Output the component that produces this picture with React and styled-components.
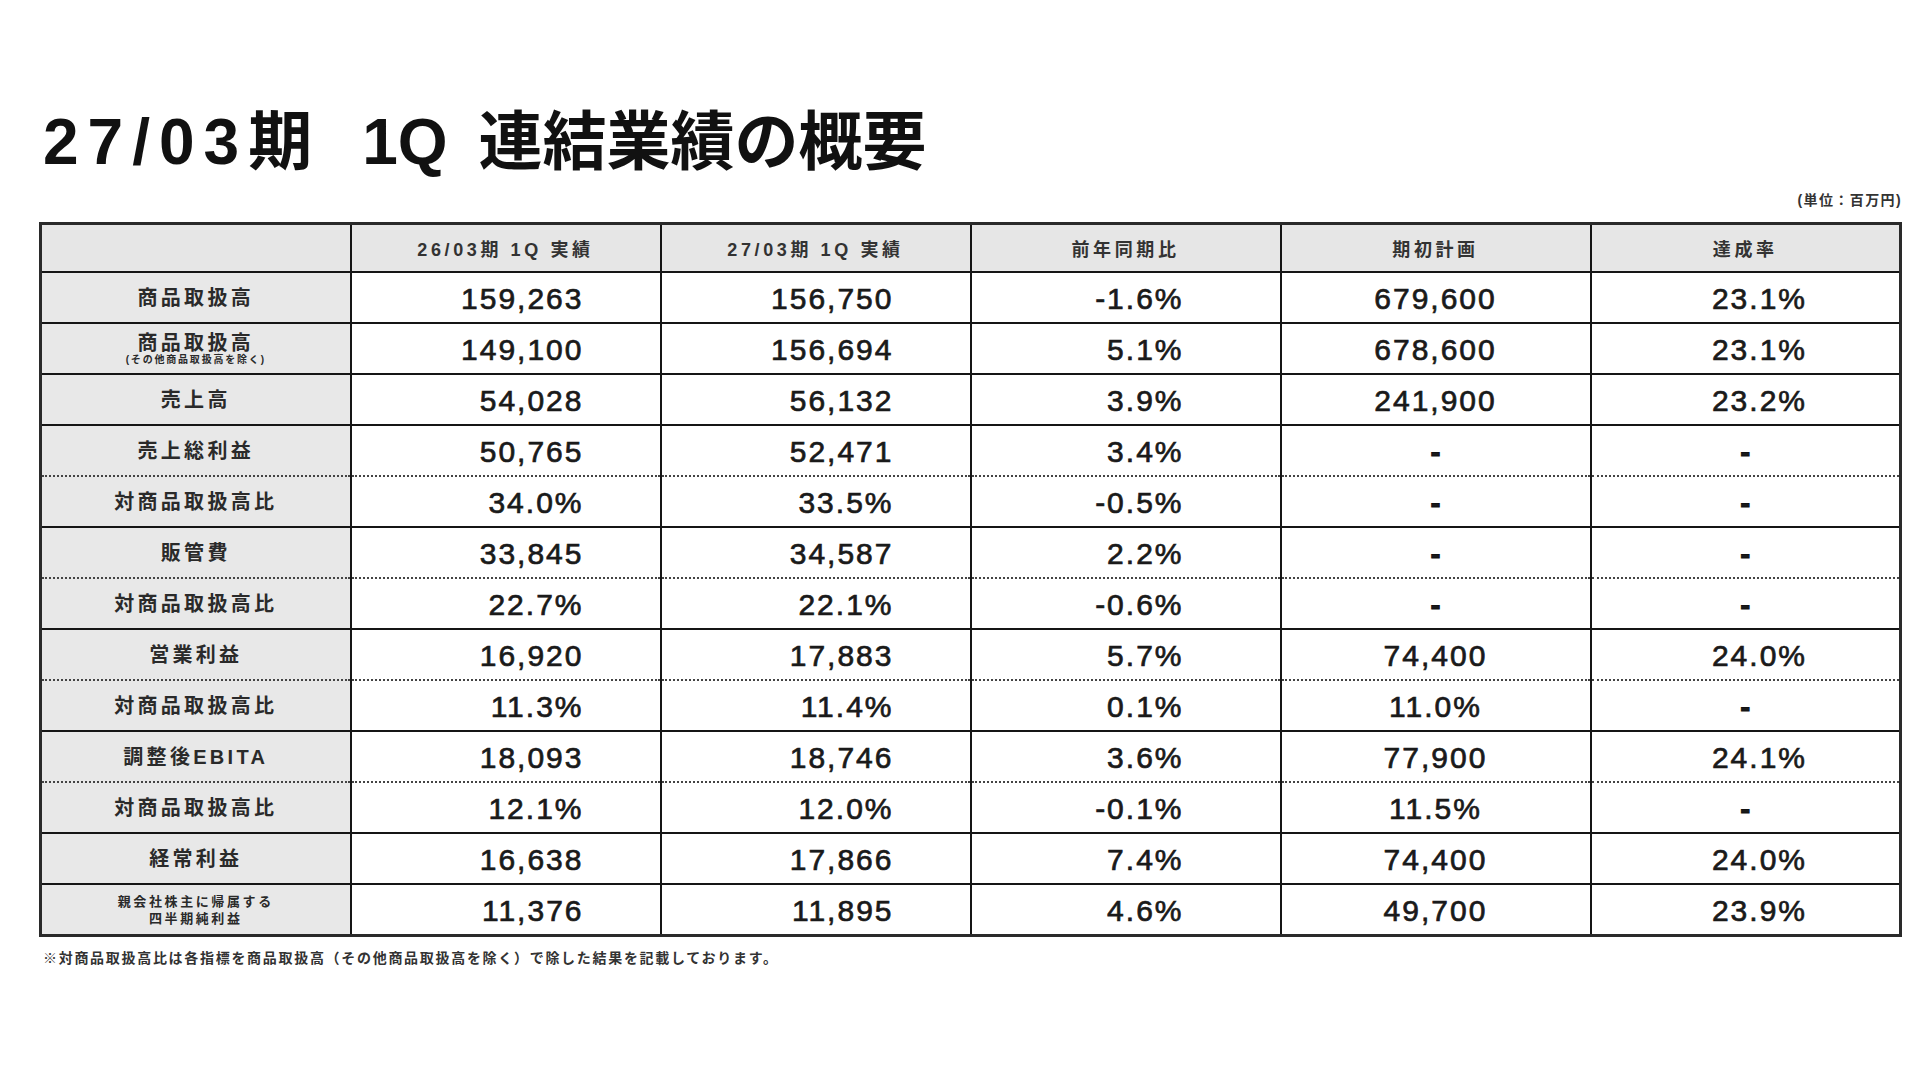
import React from "react";
import styled, { createGlobalStyle } from "styled-components";

const GlobalStyle = createGlobalStyle`
  body {
    margin: 0;
    background: #fff;
    font-family: "Liberation Sans", "Noto Sans CJK JP", sans-serif;
  }
`;

const Page = styled.div`
  width: 1920px;
  height: 1080px;
  box-sizing: border-box;
  padding: 104px 18px 0 39px;
`;

const Title = styled.h1`
  margin: 0 0 0 4px;
  font-size: 64px;
  line-height: 76px;
  font-weight: 700;
  color: #111;
`;

const TitleNum = styled.span`
  letter-spacing: 9px;
`;

const Space = styled.span`
  display: inline-block;
  width: ${(p) => p.$w}px;
`;

const Unit = styled.div`
  margin: 12px 0 14px;
  text-align: right;
  font-size: 14px;
  line-height: 16px;
  font-weight: 700;
  letter-spacing: 1.4px;
  color: #333;
`;

const Table = styled.table`
  width: 1863px;
  border-collapse: collapse;
  table-layout: fixed;
  border: 3px solid #2a2a2a;
`;

const HeadCell = styled.th`
  height: 46px;
  padding: 0;
  background: #e6e6e6;
  border: 2px solid #151515;
  font-size: 18px;
  font-weight: 700;
  letter-spacing: 3.6px;
  color: #333;
`;

const RowLabel = styled.th`
  height: 47px;
  padding: 0;
  background: #e8e8e8;
  border-left: 2px solid #151515;
  border-right: 2px solid #151515;
  border-top: ${(p) => (p.$dotted ? "2px dotted #444" : "2px solid #151515")};
  font-size: ${(p) => (p.$small ? "13px" : "20px")};
  line-height: ${(p) => (p.$small ? "17px" : "22px")};
  font-weight: 700;
  letter-spacing: ${(p) => (p.$small ? "2.6px" : "3.3px")};
  color: #2a2a2a;
  white-space: pre-line;
`;

const SubCaption = styled.span`
  display: block;
  font-size: 10px;
  line-height: 11px;
  letter-spacing: 1.8px;
`;

const Cell = styled.td`
  height: 47px;
  padding: 2px ${(p) => p.$pad}px 0 0;
  border-left: 2px solid #151515;
  border-right: 2px solid #151515;
  border-top: ${(p) => (p.$dotted ? "2px dotted #444" : "2px solid #151515")};
  text-align: ${(p) => p.$align};
  font-size: 30px;
  letter-spacing: 2px;
  color: #1a1a1a;
  -webkit-text-stroke: 0.7px #1a1a1a;
`;

const DashCell = styled(Cell)`
  padding-right: 0;
  text-align: center;
  font-size: 30px;
  font-weight: 700;
  letter-spacing: 0;
  -webkit-text-stroke: 1px #111;
`;

const Note = styled.p`
  margin: 11px 0 0 4px;
  font-size: 14px;
  line-height: 20px;
  font-weight: 700;
  letter-spacing: 1.7px;
  color: #333;
`;

const columns = [
  { align: "right", pad: 76 },
  { align: "right", pad: 76 },
  { align: "right", pad: 96 },
  { align: "center", pad: 0 },
  { align: "right", pad: 92 },
];

const headers = ["26/03期 1Q 実績", "27/03期 1Q 実績", "前年同期比", "期初計画", "達成率"];

const rows = [
  { label: "商品取扱高", values: ["159,263", "156,750", "-1.6%", "679,600", "23.1%"] },
  { label: "商品取扱高", sub: "(その他商品取扱高を除く)", values: ["149,100", "156,694", "5.1%", "678,600", "23.1%"] },
  { label: "売上高", values: ["54,028", "56,132", "3.9%", "241,900", "23.2%"] },
  { label: "売上総利益", values: ["50,765", "52,471", "3.4%", "-", "-"] },
  { label: "対商品取扱高比", dotted: true, values: ["34.0%", "33.5%", "-0.5%", "-", "-"] },
  { label: "販管費", values: ["33,845", "34,587", "2.2%", "-", "-"] },
  { label: "対商品取扱高比", dotted: true, values: ["22.7%", "22.1%", "-0.6%", "-", "-"] },
  { label: "営業利益", values: ["16,920", "17,883", "5.7%", "74,400", "24.0%"] },
  { label: "対商品取扱高比", dotted: true, values: ["11.3%", "11.4%", "0.1%", "11.0%", "-"] },
  { label: "調整後EBITA", values: ["18,093", "18,746", "3.6%", "77,900", "24.1%"] },
  { label: "対商品取扱高比", dotted: true, values: ["12.1%", "12.0%", "-0.1%", "11.5%", "-"] },
  { label: "経常利益", values: ["16,638", "17,866", "7.4%", "74,400", "24.0%"] },
  { label: "親会社株主に帰属する\n四半期純利益", small: true, values: ["11,376", "11,895", "4.6%", "49,700", "23.9%"] },
];

export default function App() {
  return (
    <Page>
      <GlobalStyle />
      <Title>
        <TitleNum>27/03</TitleNum>期<Space $w={50}> </Space>1Q<Space $w={31}> </Space>連結業績の概要
      </Title>
      <Unit>(単位：百万円)</Unit>
      <Table>
        <thead>
          <tr>
            <HeadCell />
            {headers.map((h) => (
              <HeadCell key={h}>{h}</HeadCell>
            ))}
          </tr>
        </thead>
        <tbody>
          {rows.map((r, i) => (
            <tr key={i}>
              <RowLabel $dotted={r.dotted} $small={r.small}>
                {r.label}
                {r.sub && <SubCaption>{r.sub}</SubCaption>}
              </RowLabel>
              {r.values.map((v, j) =>
                v === "-" ? (
                  <DashCell key={j} $dotted={r.dotted} $align="center" $pad={0}>
                    -
                  </DashCell>
                ) : (
                  <Cell key={j} $dotted={r.dotted} $align={columns[j].align} $pad={columns[j].pad}>
                    {v}
                  </Cell>
                )
              )}
            </tr>
          ))}
        </tbody>
      </Table>
      <Note>※対商品取扱高比は各指標を商品取扱高（その他商品取扱高を除く）で除した結果を記載しております。</Note>
    </Page>
  );
}
